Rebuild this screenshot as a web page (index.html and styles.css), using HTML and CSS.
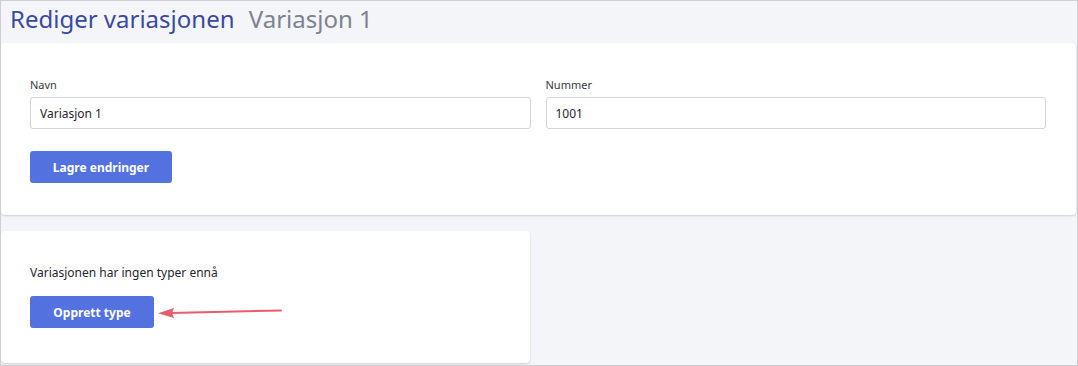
FILE: index.html
```html
<!DOCTYPE html>
<html lang="no">
<head>
  <meta charset="UTF-8">
  <meta name="viewport" content="width=device-width, initial-scale=1.0">
  <title>Rediger variasjonen</title>
  <link rel="stylesheet" href="styles.css">
</head>
<body>
  <div class="window">
    <h1 class="title">Rediger variasjonen <span class="subtitle">Variasjon 1</span></h1>

    <div class="card card-wide">
      <div class="fields">
        <div class="field">
          <label class="label" for="navn">Navn</label>
          <input class="input" id="navn" type="text" value="Variasjon 1">
        </div>
        <div class="field">
          <label class="label" for="nummer">Nummer</label>
          <input class="input" id="nummer" type="text" value="1001">
        </div>
      </div>
      <button class="btn">Lagre endringer</button>
    </div>

    <div class="card card-half">
      <p class="empty">Variasjonen har ingen typer ennå</p>
      <div class="actions">
        <button class="btn">Opprett type</button>
        <svg class="arrow" width="126" height="16" viewBox="0 0 126 16">
          <path d="M124 6.5 L14 9" stroke="#e85d6c" stroke-width="2" stroke-linecap="round" fill="none"/>
          <path d="M1 9.3 L17 4 L15 9 L17 14 Z" fill="#e85d6c"/>
        </svg>
      </div>
    </div>
  </div>
</body>
</html>
```

FILE: styles.css
```css
* {
  box-sizing: border-box;
}

body {
  margin: 0;
  font-family: "Noto Sans", "Open Sans", sans-serif;
  color: #1f2430;
}

.window {
  height: 366px;
  background-color: #f4f5f9;
  border: 1px solid #cdcdd2;
  overflow: hidden;
}

.title {
  margin: 0;
  padding: 0 0 0 9px;
  height: 42px;
  font-size: 24px;
  font-weight: 400;
  line-height: 35px;
  color: #3a4a9e;
}

.subtitle {
  margin-left: 8px;
  color: #7c8292;
}

.card {
  background-color: #fff;
  border-radius: 4px;
  box-shadow: 0 1px 2px rgba(0, 0, 0, 0.16);
}

.card-wide {
  margin-right: 1px;
  height: 172px;
  padding: 34px 30px 0 29px;
}

.card-half {
  margin-top: 16px;
  width: 529px;
  height: 132px;
  padding: 34px 29px 0 29px;
}

.fields {
  display: flex;
  gap: 15px;
}

.field {
  flex: 1;
  display: flex;
  flex-direction: column;
}

.label {
  font-size: 11px;
  font-weight: 400;
  line-height: 15px;
  margin-bottom: 5px;
  color: #353a44;
}

.input {
  height: 32px;
  border: 1px solid #d2d4da;
  border-radius: 3px;
  padding: 0 9px;
  font-family: inherit;
  font-size: 12px;
  color: #1f2430;
}

.btn {
  margin-top: 22px;
  height: 32px;
  padding: 0 22px;
  border: none;
  border-radius: 3px;
  background-color: #5372e0;
  color: #fff;
  font-family: inherit;
  font-size: 12px;
  font-weight: 700;
}

.card-wide .btn {
  width: 142px;
}

.empty {
  margin: 0;
  font-size: 12px;
  line-height: 16px;
}

.actions {
  display: flex;
  align-items: center;
  margin-top: 15px;
}

.actions .btn {
  margin-top: 0;
  width: 124px;
}

.arrow {
  margin-left: 3px;
}
```
